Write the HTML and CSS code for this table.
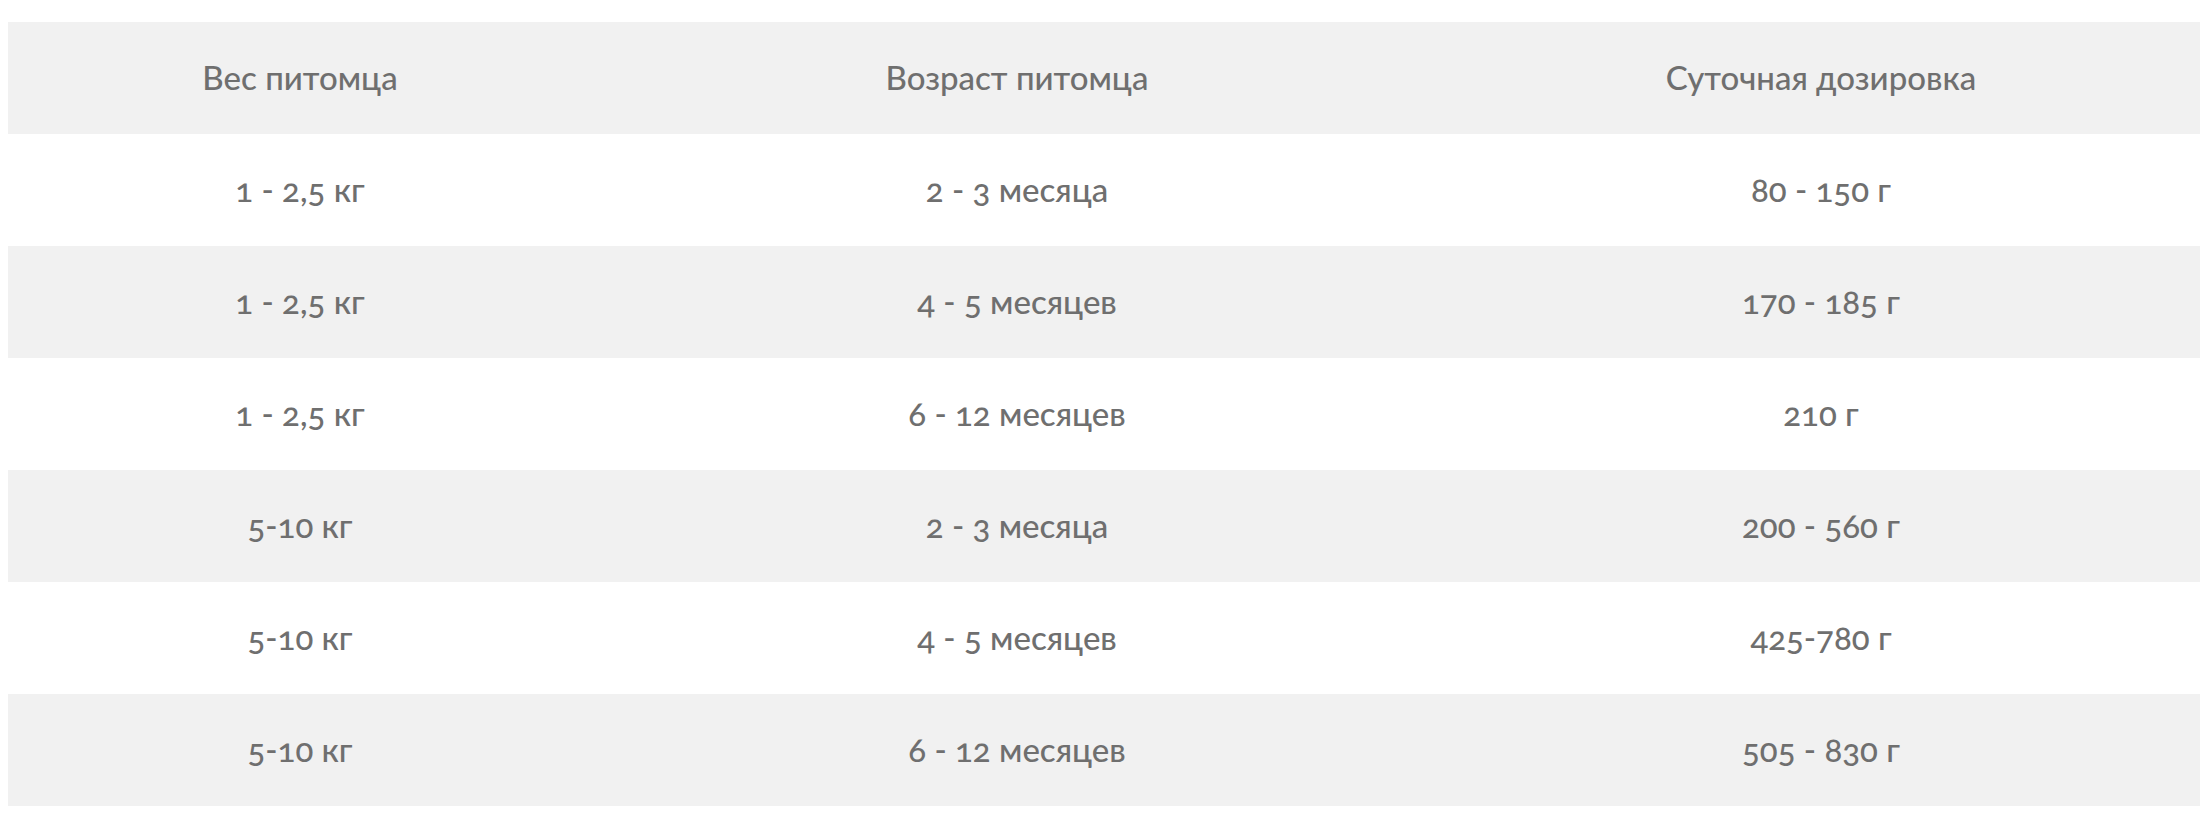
FILE: index.html
```
<!DOCTYPE html>
<html lang="ru">
<head>
<meta charset="utf-8">
<title>Дозировка</title>
<link rel="stylesheet" href="styles.css">
</head>
<body>
<table class="dose">
  <colgroup>
    <col class="c1">
    <col class="c2">
    <col class="c3">
  </colgroup>
  <thead>
    <tr><th>Вес питомца</th><th>Возраст питомца</th><th>Суточная дозировка</th></tr>
  </thead>
  <tbody>
    <tr><td>1 - 2,5 кг</td><td>2 - 3 месяца</td><td>80 - 150 г</td></tr>
    <tr><td>1 - 2,5 кг</td><td>4 - 5 месяцев</td><td>170 - 185 г</td></tr>
    <tr><td>1 - 2,5 кг</td><td>6 - 12 месяцев</td><td>210 г</td></tr>
    <tr><td>5-10 кг</td><td>2 - 3 месяца</td><td>200 - 560 г</td></tr>
    <tr><td>5-10 кг</td><td>4 - 5 месяцев</td><td>425-780 г</td></tr>
    <tr><td>5-10 кг</td><td>6 - 12 месяцев</td><td>505 - 830 г</td></tr>
  </tbody>
</table>
</body>
</html>
```
FILE: styles.css
```
html, body {
  background: #ffffff;
}
body {
  margin: 8px;
  font-family: Lato, "Open Sans", "DejaVu Sans", sans-serif;
  color: #6f6f6f;
}
.dose {
  margin-top: 14px;
  width: 100%;
  border-collapse: collapse;
  table-layout: fixed;
  font-variant-numeric: oldstyle-nums;
}
.c1 { width: 584px; }
.c2 { width: 850px; }
.c3 { width: auto; }
.dose th,
.dose td {
  height: 112px;
  padding: 0;
  text-align: center;
  vertical-align: middle;
  font-size: 33px;
  font-weight: 500;
  line-height: 1.2;
}
.dose thead tr,
.dose tbody tr:nth-child(even) {
  background: #f1f1f1;
}
```
